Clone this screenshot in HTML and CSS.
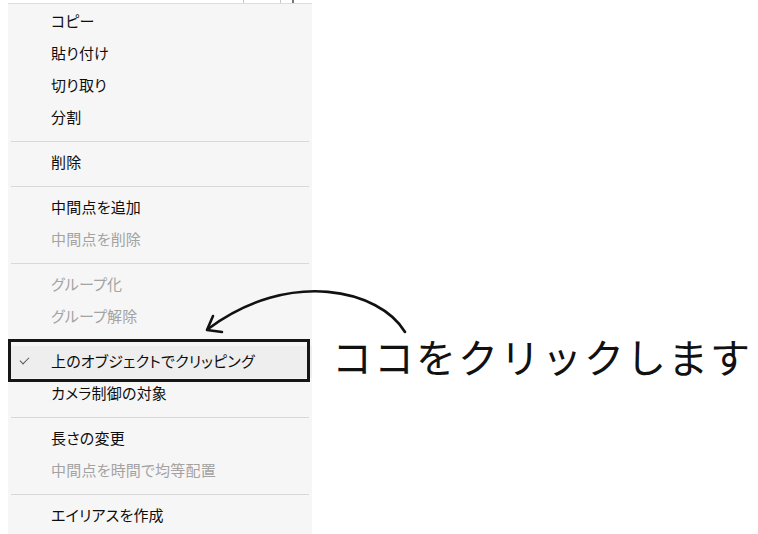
FILE: index.html
```html
<!DOCTYPE html>
<html lang="ja">
<head>
    <meta charset="UTF-8">
    <meta name="viewport" content="width=device-width, initial-scale=1.0">
    <title>クリッピング</title>
    <link rel="stylesheet" href="styles.css">
</head>
<body>
    <div class="window-edge">
        <span class="edge-cell wide"></span>
        <span class="edge-cell"></span>
        <span class="edge-cell mark"></span>
    </div>
    <ul class="context-menu">
        <li class="menu-item">コピー</li>
        <li class="menu-item">貼り付け</li>
        <li class="menu-item">切り取り</li>
        <li class="menu-item">分割</li>
        <li class="menu-sep"></li>
        <li class="menu-item">削除</li>
        <li class="menu-sep"></li>
        <li class="menu-item">中間点を追加</li>
        <li class="menu-item disabled">中間点を削除</li>
        <li class="menu-sep"></li>
        <li class="menu-item disabled">グループ化</li>
        <li class="menu-item disabled">グループ解除</li>
        <li class="menu-sep"></li>
        <li class="menu-item checked">上のオブジェクトでクリッピング</li>
        <li class="menu-item">カメラ制御の対象</li>
        <li class="menu-sep"></li>
        <li class="menu-item">長さの変更</li>
        <li class="menu-item disabled">中間点を時間で均等配置</li>
        <li class="menu-sep"></li>
        <li class="menu-item">エイリアスを作成</li>
    </ul>

    <div class="callout-box"></div>
    <svg class="callout-arrow" width="758" height="534" viewBox="0 0 758 534">
        <path d="M405 332 C380 290 290 268 208 329" fill="none" stroke="#111" stroke-width="2.6" stroke-linecap="round"/>
        <path d="M213 316 L207 330 L222 332" fill="none" stroke="#111" stroke-width="2.6" stroke-linecap="round" stroke-linejoin="round"/>
    </svg>
    <div class="callout-text">ココをクリックします</div>
</body>
</html>
```

FILE: styles.css
```css
*{
    padding: 0;
    margin: 0;
    box-sizing: border-box;
}
body{
    background-color: #ffffff;
    font-family: "Noto Sans CJK JP", "Noto Sans", sans-serif;
    width: 758px;
    height: 534px;
    overflow: hidden;
    position: relative;
}
.window-edge{
    height: 3px;
    display: flex;
    justify-content: flex-end;
    width: 312px;
}
.edge-cell{
    width: 12px;
    border-left: 1px solid #c8c8c8;
}
.edge-cell.wide{
    width: 37px;
}
.edge-cell.mark{
    width: 20px;
    border-left: 2px solid #777;
}
.context-menu{
    list-style: none;
    margin-left: 8px;
    width: 304px;
    height: 531px;
    background-color: #f6f6f6;
    border-top: 1px solid #dedede;
    padding-top: 2px;
}
.menu-item{
    height: 32px;
    display: flex;
    align-items: center;
    padding-left: 43px;
    padding-bottom: 3px;
    font-size: 15px;
    letter-spacing: 0.2px;
    font-feature-settings: "palt";
    color: #0d0d0d;
    position: relative;
}
.menu-item.disabled{
    color: #a3a3a3;
}
.menu-item.checked{
    background-color: #eeeeee;
}
.menu-item.checked::before{
    content: "";
    position: absolute;
    left: 12px;
    top: 11px;
    width: 8px;
    height: 4px;
    border-left: 1.5px solid #555;
    border-bottom: 1.5px solid #555;
    transform: rotate(-45deg);
}
.menu-sep{
    height: 1px;
    margin: 7px 3px 5px 3px;
    background-color: #d9d9d9;
}
.callout-box{
    position: absolute;
    left: 8px;
    top: 339px;
    width: 302px;
    height: 43px;
    border: 3px solid #161616;
}
.callout-arrow{
    position: absolute;
    left: 0;
    top: 0;
}
.callout-text{
    position: absolute;
    left: 332px;
    top: 334px;
    font-size: 40px;
    line-height: 44px;
    letter-spacing: 2px;
    color: #111;
    font-weight: 400;
}
```
